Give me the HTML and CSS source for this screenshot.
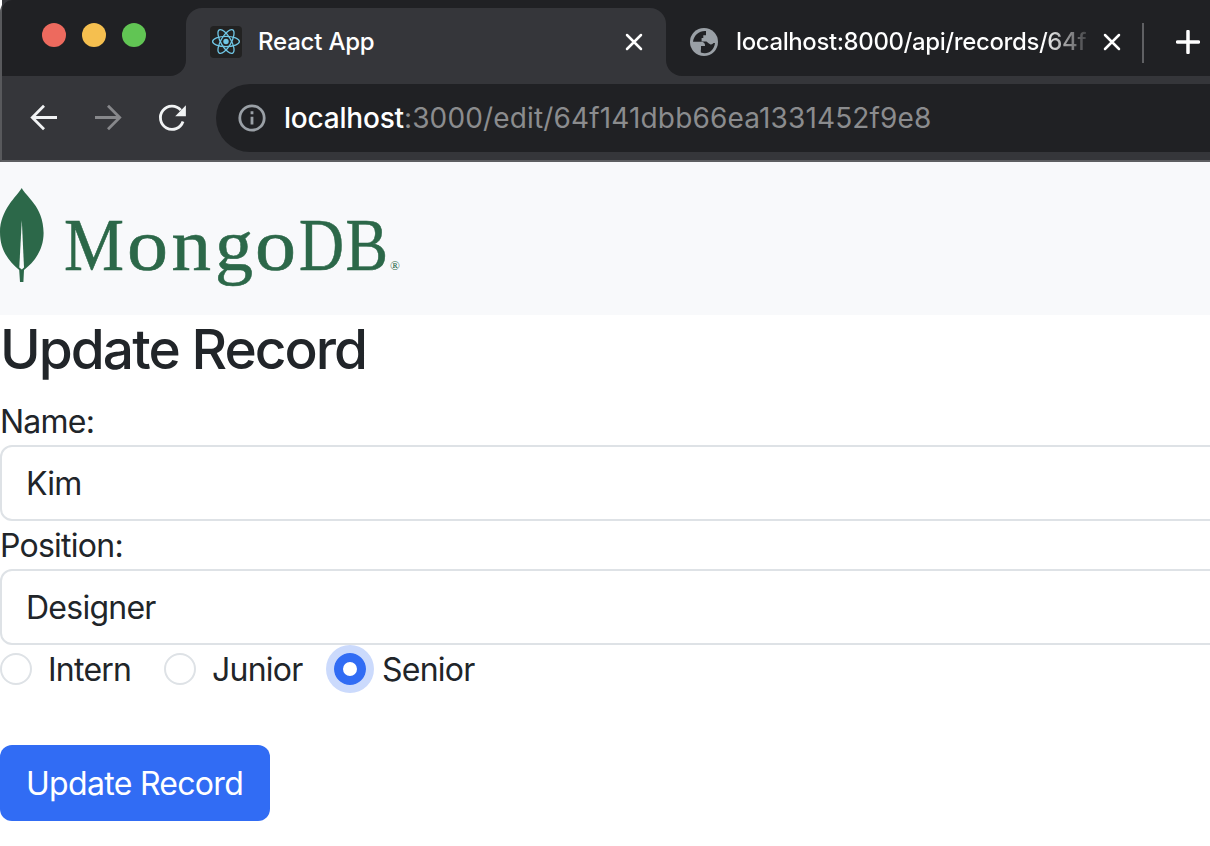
FILE: index.html
```html
<!DOCTYPE html>
<html lang="en">
<head>
<meta charset="utf-8">
<title>React App</title>
<link rel="stylesheet" href="styles.css">
</head>
<body>
<header class="browser">
  <div class="tabs">
    <div class="controls"><i class="dot red"></i><i class="dot yellow"></i><i class="dot green"></i></div>
    <div class="tab-active">
      <svg class="react" viewBox="0 0 32 32"><rect width="32" height="32" rx="4" fill="#222"/><g fill="none" stroke="#70c7e6" stroke-width="1.3"><ellipse cx="16" cy="15.5" rx="13.4" ry="5.1"/><ellipse cx="16" cy="15.5" rx="13.4" ry="5.1" transform="rotate(60 16 15.5)"/><ellipse cx="16" cy="15.5" rx="13.4" ry="5.1" transform="rotate(120 16 15.5)"/></g><circle cx="16" cy="15.5" r="2.7" fill="#70c7e6"/></svg>
      <span class="tab-title first">React App</span>
      <svg class="close" viewBox="0 0 18 18"><path d="M2 2l14 14M16 2L2 16"/></svg>
    </div>
    <div class="tab-other">
      <svg class="globe" viewBox="0 0 28 28"><circle cx="14" cy="14" r="14" fill="#9aa0a6"/><path fill="#202124" d="M16 3.100C9.600 2.500 3.800 7 3 13.800h8.200c2.300 0 3.800 1.500 3.800 3.400v.800h-4v3.700h-.200v2.700c6.400 2.600 13.300-1.200 14.200-9.400h-1.500c-.800 1.100-2 1.700-3.400 1.200-1.800-.600-2.100-2-3.700-2.700h-4.800v-3.500h1.700V7.200H16z"/></svg>
      <span class="tab-title second">localhost:8000/api/records/64f</span>
      <svg class="close" viewBox="0 0 18 18"><path d="M2 2l14 14M16 2L2 16"/></svg>
    </div>
    <i class="divider"></i>
    <svg class="plus" viewBox="0 0 24 24"><path d="M12 1.500v21M1.500 12h21"/></svg>
  </div>
  <div class="toolbar">
    <svg class="nav-icon" viewBox="0 0 32 32"><path d="M29 15.500H5M16 3.800L4.300 15.500 16 27.200"/></svg>
    <svg class="nav-icon dim" viewBox="0 0 32 32"><path d="M3 15.500h24M16 3.800l11.700 11.700L16 27.200"/></svg>
    <svg class="nav-icon" viewBox="0 0 32 32"><path d="M27 19.500A11.600 11.600 0 1 1 24.800 8.200"/><path class="solid" d="M29.900 3.300v10.900H19.200z"/></svg>
    <div class="address">
      <svg class="info" viewBox="0 0 28 28"><circle cx="14" cy="14" r="12.200"/><path d="M14 12.700v7.800M14 7.300v3"/></svg>
      <span class="url"><b>localhost</b>:3000/edit/64f141dbb66ea1331452f9e8</span>
    </div>
  </div>
</header>
<nav class="navbar">
  <svg class="logo" viewBox="0 0 402 106">
    <path d="M21.800 0C25 8 43.600 18 43.600 45C43.600 63 33 75 24 82L23.400 94H20L19.200 82C9 73 0 63 0 44C0 22 17 8 21.800 0Z"/>
    <path class="vein" d="M21.800 32L24 79.500L21.800 81.500L19.300 79.500Z"/>
    <text class="wordmark" y="82"><tspan x="64" textLength="60" lengthAdjust="spacingAndGlyphs">M</tspan><tspan x="127" textLength="41" lengthAdjust="spacingAndGlyphs">o</tspan><tspan x="171.500" textLength="39.500" lengthAdjust="spacingAndGlyphs">n</tspan><tspan x="215" textLength="38" lengthAdjust="spacingAndGlyphs">g</tspan><tspan x="255" textLength="41" lengthAdjust="spacingAndGlyphs">o</tspan><tspan x="299" textLength="45" lengthAdjust="spacingAndGlyphs">D</tspan><tspan x="345.500" textLength="42.500" lengthAdjust="spacingAndGlyphs">B</tspan></text>
    <text class="registered" x="390" y="82">®</text>
  </svg>
</nav>
<main>
  <h3 class="heading">Update Record</h3>
  <label class="label name">Name:</label>
  <div class="field kim">Kim</div>
  <label class="label position">Position:</label>
  <div class="field designer">Designer</div>
  <div class="radios">
    <span class="option intern"><i class="radio"></i><span class="option-text">Intern</span></span>
    <span class="option junior"><i class="radio"></i><span class="option-text">Junior</span></span>
    <span class="option senior"><i class="radio checked"></i><span class="option-text">Senior</span></span>
  </div>
  <button class="submit">Update Record</button>
</main>
</body>
</html>
```
FILE: styles.css
```css
* { box-sizing: border-box; }
body { margin: 0; width: 1210px; height: 846px; overflow: hidden; background: #fff; color: #212529; font: 32px/48px Inter, sans-serif; font-weight: 430; letter-spacing: -.75px; }
svg { display: block; flex: none; }
.browser { height: 162px; background: #35363a; border-left: 2px solid #58595c; border-bottom: 2px solid #5d5e61; border-top-left-radius: 12px; letter-spacing: 0; }
.tabs { display: flex; height: 76px; background: #35363a; }
.controls { display: flex; gap: 16px; width: 184px; padding: 23px 0 0 40px; background: #202124; border-radius: 10px 0 16px 0; }
.dot { width: 24px; height: 24px; border-radius: 50%; }
.red { background: #ed6a5e; }
.yellow { background: #f5bf4f; }
.green { background: #61c554; }
.tab-active { display: flex; align-items: center; width: 480px; padding: 8px 23px 0 24px; background: linear-gradient(#202124 0 0) top / 100% 24px no-repeat, #35363a; position: relative; z-index: 0; }
.tab-active::before { content: ""; position: absolute; inset: 8px 0 0; border-radius: 16px 16px 0 0; background: #35363a; z-index: -1; }
.react { width: 32px; height: 32px; }
.tab-title { color: #fff; font-size: 24px; line-height: 30px; font-weight: 450; white-space: nowrap; }
.first { margin-left: 16px; letter-spacing: -.2px; }
.close { width: 18px; height: 18px; margin-left: auto; fill: none; stroke: #fff; stroke-width: 2.5; stroke-linecap: round; }
.tab-other { display: flex; align-items: center; width: 476px; padding: 8px 21px 0 24px; background: #202124; border-bottom-left-radius: 16px; }
.globe { width: 28px; height: 28px; }
.second { width: 350px; margin-left: 18px; overflow: hidden; letter-spacing: -.4px; color: transparent; background: linear-gradient(90deg, #fff 308px, #202124 358px); background-clip: text; }
.divider { width: 68px; background: linear-gradient(#5f6063 0 0) 0 23px / 2px 40px no-repeat #202124; }
.tabs .plus { margin: 30px 0 0 -34px; width: 24px; height: 24px; fill: none; stroke: #fff; stroke-width: 3.5; stroke-linecap: round; }
.toolbar { display: flex; align-items: center; height: 84px; padding-left: 26px; }
.nav-icon { width: 32px; height: 32px; margin-right: 32px; fill: none; stroke: #f1f3f4; stroke-width: 2.8; }
.dim { stroke: #87888b; }
.nav-icon .solid { fill: #f1f3f4; stroke: none; }
.address { display: flex; align-items: center; flex: 1; height: 68px; margin-left: -4px; padding: 0 0 0 22px; border-radius: 34px 0 0 34px; background: #202124; }
.info { width: 28px; height: 28px; fill: none; stroke: #9aa0a6; stroke-width: 2.8; }
.url { margin-left: 18px; font-size: 28px; line-height: 40px; color: #8b8c8e; white-space: nowrap; letter-spacing: .15px; }
.url b { font-weight: 450; color: #fff; letter-spacing: -.2px; }
.navbar { height: 153px; padding-top: 26px; background: #f8f9fb; }
.logo { width: 402px; height: 106px; fill: #2c6849; overflow: visible; }
.logo .vein { fill: #f8f9fb; }
.wordmark { font-family: "Liberation Serif", serif; font-size: 75px; stroke: #2c6849; stroke-width: .6; letter-spacing: 0; }
.registered { font-family: "Liberation Serif", serif; font-size: 13px; letter-spacing: 0; }
.heading { height: 67px; margin: 0 0 15px; font-size: 55px; line-height: 68px; font-weight: 530; letter-spacing: -1.95px; }
.label { display: block; height: 48px; line-height: 50px; }
.field { width: 1230px; height: 76px; padding: 12px 24px; line-height: 50px; border: 2px solid #dee2e6; border-radius: 12px; }
.radios { display: flex; height: 100px; align-items: flex-start; }
.option { display: flex; align-items: center; gap: 16px; height: 48px; }
.option-text { padding-top: 2px; }
.intern { width: 164px; }
.junior { width: 170px; }
.radio { width: 32px; height: 32px; flex: none; border: 2px solid #dee2e6; border-radius: 50%; }
.checked { border: 9px solid #316cf4; box-shadow: 0 0 0 8px #cbdafc; }
.submit { display: block; width: 270px; height: 76px; padding: 2px 0 0 26px; border: 0; border-radius: 12px; background: #316cf4; color: #fff; font: inherit; letter-spacing: -.7px; text-align: left; white-space: nowrap; }
```
